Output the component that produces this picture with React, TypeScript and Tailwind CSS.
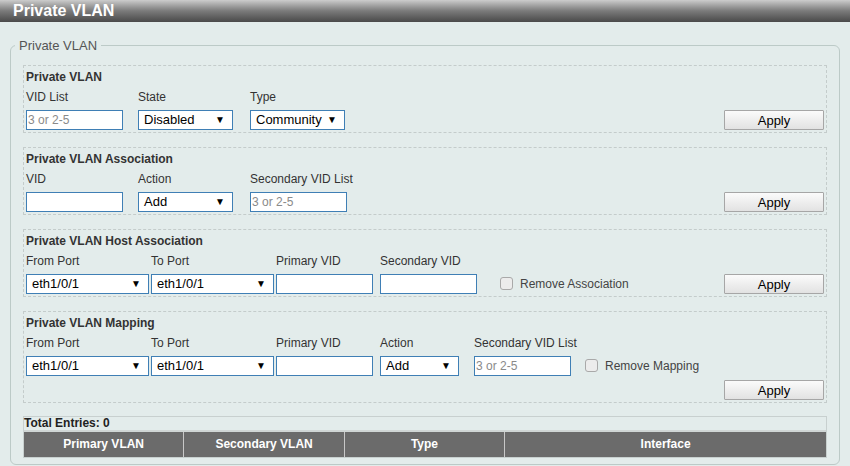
const font = { fontFamily: '"Liberation Sans", Arial, sans-serif' }

function TextBox({ w, ph }: { w: string; ph?: string }) {
  return (
    <input
      type="text"
      placeholder={ph}
      className={`${w} h-[20px] border border-[#3f7fb5] bg-white px-[1px] text-[12px] text-black outline-none placeholder:text-[#8a8a8a]`}
      style={font}
    />
  )
}

function Select({ w, value }: { w: string; value: string }) {
  return (
    <div
      className={`${w} flex h-[20px] items-center justify-between border border-[#3f7fb5] bg-white pl-[5px] pr-[7px] text-[13px] text-black`}
    >
      <span>{value}</span>
      <span className="text-[10px] leading-none">▼</span>
    </div>
  )
}

function Apply() {
  return (
    <button
      type="button"
      className="h-[20px] w-[100px] rounded-[1px] border border-[#a6a6a6] bg-gradient-to-b from-[#fbfbfb] to-[#e2e2e2] text-[13px] text-black"
      style={font}
    >
      Apply
    </button>
  )
}

function Check({ label }: { label: string }) {
  return (
    <div className="flex items-center gap-[7px] text-[12px] text-[#444]">
      <span className="h-[13px] w-[13px] rounded-[3px] border border-[#a9a9a9] bg-[#ececec]" />
      {label}
    </div>
  )
}

function Section({ title, children, className = '' }: { title: string; children: React.ReactNode; className?: string }) {
  return (
    <div className={`border border-dashed border-[#c4cccb] px-[2px] pt-[2px] ${className}`}>
      <div className="h-[18px] text-[12px] font-bold leading-[18px] text-[#333]">{title}</div>
      {children}
    </div>
  )
}

function Labels({ items }: { items: [string, string][] }) {
  return (
    <div className="mt-[2px] flex h-[18px] items-center text-[12px] text-[#333]">
      {items.map(([t, w]) => (
        <div key={t + w} className={w}>
          {t}
        </div>
      ))}
    </div>
  )
}

export default function App() {
  return (
    <div className="h-[466px] w-[850px] overflow-hidden bg-[#e3eceb]" style={font}>
      <div className="h-[22px] bg-gradient-to-b from-[#cccccc] via-[#7a7a7a] to-[#4a4a4a] pl-[13px] text-[16px] font-bold leading-[22px] text-white">
        Private VLAN
      </div>

      <fieldset className="mx-[10px] mt-[14px] rounded-[6px] border border-[#bccac7] px-[12px] pb-[6px] pt-0">
        <legend className="ml-[-8px] px-[4px] text-[13px] text-[#555]">Private VLAN</legend>

        <Section title="Private VLAN" className="mt-[9px] pb-[2px]">
          <Labels items={[['VID List', 'w-[112px]'], ['State', 'w-[112px]'], ['Type', 'w-[100px]']]} />
          <div className="mt-[4px] flex h-[20px] items-center">
            <TextBox w="w-[97px]" ph="3 or 2-5" />
            <div className="w-[15px]" />
            <Select w="w-[95px]" value="Disabled" />
            <div className="w-[17px]" />
            <Select w="w-[95px]" value="Community" />
            <div className="flex-1" />
            <Apply />
          </div>
        </Section>

        <Section title="Private VLAN Association" className="mt-[14px] pb-[2px]">
          <Labels items={[['VID', 'w-[112px]'], ['Action', 'w-[112px]'], ['Secondary VID List', 'w-[150px]']]} />
          <div className="mt-[4px] flex h-[20px] items-center">
            <TextBox w="w-[97px]" />
            <div className="w-[15px]" />
            <Select w="w-[95px]" value="Add" />
            <div className="w-[17px]" />
            <TextBox w="w-[97px]" ph="3 or 2-5" />
            <div className="flex-1" />
            <Apply />
          </div>
        </Section>

        <Section title="Private VLAN Host Association" className="mt-[14px] pb-[2px]">
          <Labels
            items={[
              ['From Port', 'w-[125px]'],
              ['To Port', 'w-[125px]'],
              ['Primary VID', 'w-[104px]'],
              ['Secondary VID', 'w-[100px]'],
            ]}
          />
          <div className="mt-[4px] flex h-[20px] items-center">
            <Select w="w-[123px]" value="eth1/0/1" />
            <div className="w-[2px]" />
            <Select w="w-[123px]" value="eth1/0/1" />
            <div className="w-[2px]" />
            <TextBox w="w-[97px]" />
            <div className="w-[7px]" />
            <TextBox w="w-[97px]" />
            <div className="w-[23px]" />
            <Check label="Remove Association" />
            <div className="flex-1" />
            <Apply />
          </div>
        </Section>

        <Section title="Private VLAN Mapping" className="mt-[14px] pb-[2px]">
          <Labels
            items={[
              ['From Port', 'w-[125px]'],
              ['To Port', 'w-[125px]'],
              ['Primary VID', 'w-[104px]'],
              ['Action', 'w-[94px]'],
              ['Secondary VID List', 'w-[120px]'],
            ]}
          />
          <div className="mt-[4px] flex h-[20px] items-center">
            <Select w="w-[123px]" value="eth1/0/1" />
            <div className="w-[2px]" />
            <Select w="w-[123px]" value="eth1/0/1" />
            <div className="w-[2px]" />
            <TextBox w="w-[97px]" />
            <div className="w-[7px]" />
            <Select w="w-[79px]" value="Add" />
            <div className="w-[15px]" />
            <TextBox w="w-[97px]" ph="3 or 2-5" />
            <div className="w-[14px]" />
            <Check label="Remove Mapping" />
          </div>
          <div className="mt-[4px] flex justify-end">
            <Apply />
          </div>
        </Section>

        <div className="mt-[13px] border border-[#c8d0cf]">
          <div className="h-[13px] text-[12px] font-bold leading-[13px] text-[#222]">Total Entries: 0</div>
          <div className="grid h-[27px] grid-cols-[1fr_1fr_1fr_2fr] border-t-[2px] border-[#d0d6d5] bg-[#6b6b6b] text-[12px] font-bold text-white">
            <div className="flex items-center justify-center border-r border-[#c8c8c8]">Primary VLAN</div>
            <div className="flex items-center justify-center border-r border-[#c8c8c8]">Secondary VLAN</div>
            <div className="flex items-center justify-center border-r border-[#c8c8c8]">Type</div>
            <div className="flex items-center justify-center">Interface</div>
          </div>
        </div>
      </fieldset>
    </div>
  )
}
